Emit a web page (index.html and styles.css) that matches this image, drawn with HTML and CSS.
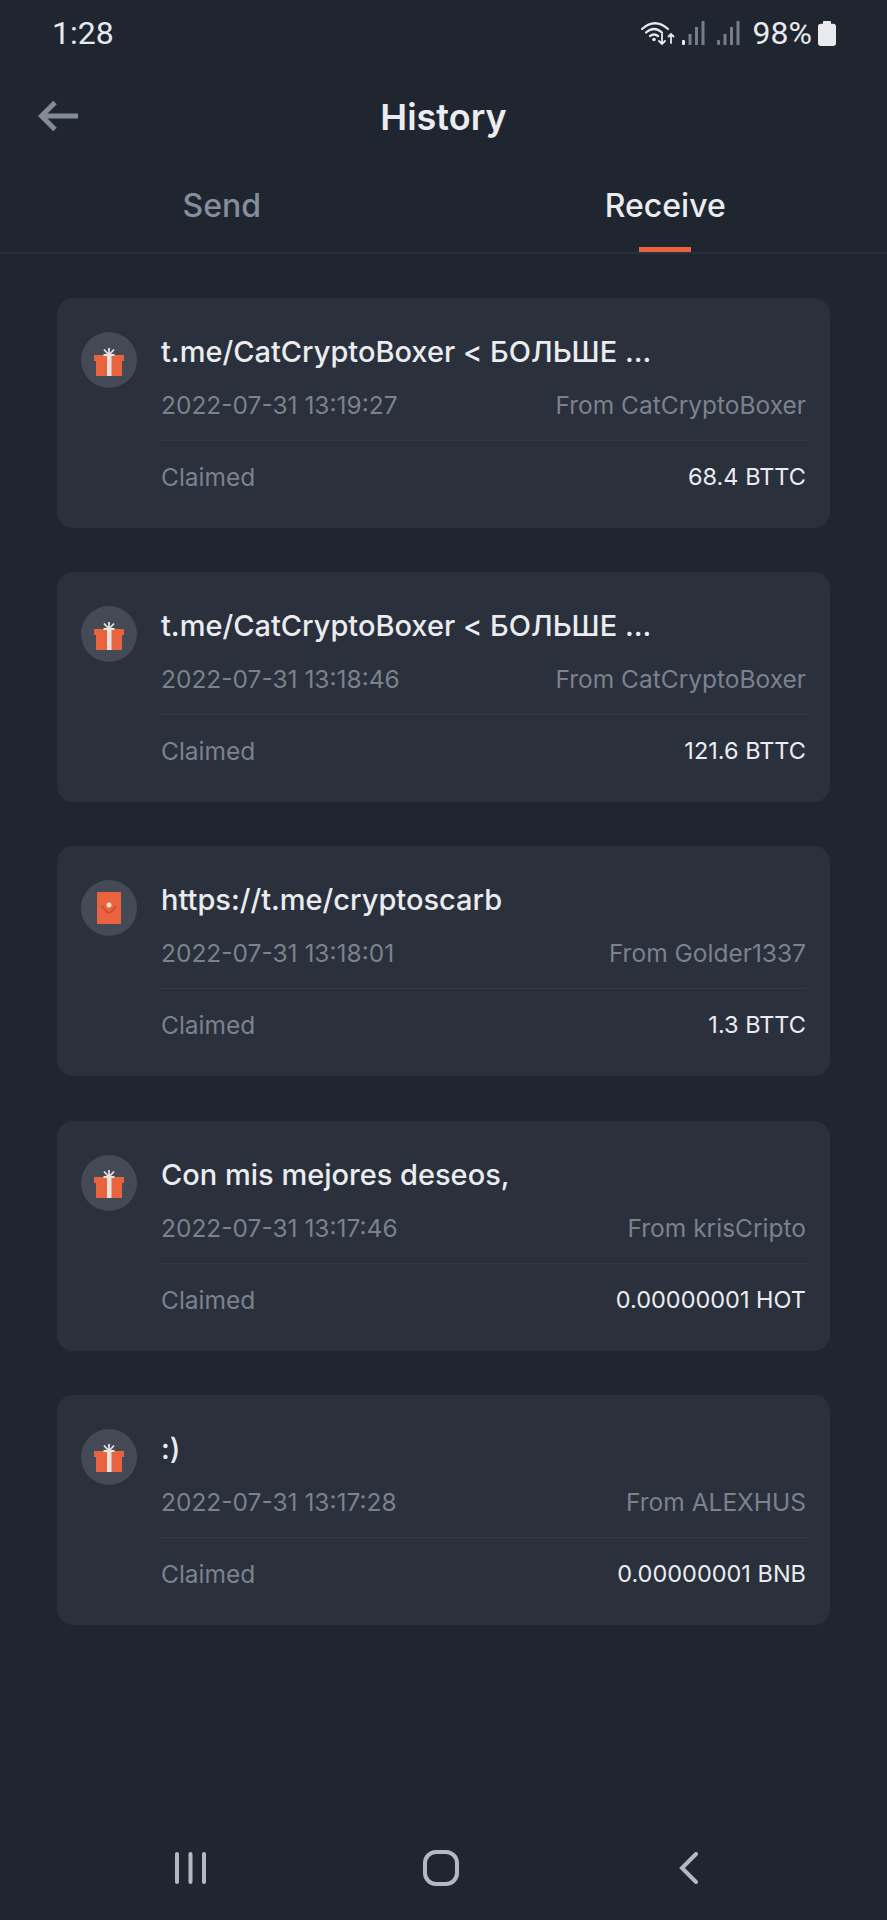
FILE: index.html
```html
<!DOCTYPE html>
<html lang="en">

<head>
    <meta charset="UTF-8">
    <meta name="viewport" content="width=device-width, initial-scale=1.0">
    <title>History</title>
    <link rel="stylesheet" href="styles.css">
</head>

<body>
    <svg class="defs" width="0" height="0">
        <symbol id="gift" viewBox="0 0 30 28">
            <path d="M0 7h30v6h-2v15H2V13H0z" fill="#e9633f"/>
            <rect x="13" y="7" width="4.500" height="21" fill="#e6e3e0"/>
            <path d="M15 7 10 1.500M15 7l5-5.500M15 7V0M15 7H9.500M15 7h5.500" stroke="#e6e3e0" stroke-width="1.800" fill="none"/>
        </symbol>
        <symbol id="envelope" viewBox="0 0 24 32">
            <rect width="24" height="32" rx="1" fill="#e9633f"/>
            <path d="M5 14q4 6 7 7 3-1 7-7" stroke="#d2492a" stroke-width="1.500" fill="none"/>
            <circle cx="12" cy="13" r="2.500" fill="#f3e3dc"/>
        </symbol>
    </svg>

    <div class="status-bar">
        <span class="clock">1:28</span>
        <div class="status-icons">
            <svg class="wifi" width="34" height="24" viewBox="0 0 34 24" fill="none" stroke="#e8eaee" stroke-linecap="round">
                <path d="M1 8Q14-3.500 27 8" stroke-width="2.200"/>
                <path d="M5 11.500q8-7 16 0" stroke-width="2.200"/>
                <path d="M9 15q4-3 8 0" stroke-width="2.200"/>
                <circle cx="13" cy="18.500" r="1.800" fill="#e8eaee" stroke="none"/>
                <path d="M21 13v10m-3-3 3 3 3-3M30 22v-9m-2.500 2.500 2.500-2.500 2.500 2.500" stroke-width="1.800"/>
            </svg>
            <svg class="signal" width="23" height="24" viewBox="0 0 23 24">
                <rect x="0" y="19" width="3" height="5" rx="1" fill="#e8eaee"/>
                <rect x="6.500" y="13" width="3" height="11" fill="#777e89"/>
                <rect x="13" y="6" width="3" height="18" fill="#777e89"/>
                <rect x="19.500" y="0" width="3" height="24" fill="#777e89"/>
            </svg>
            <svg class="signal second" width="23" height="24" viewBox="0 0 23 24">
                <rect x="0" y="19" width="3" height="5" rx="1" fill="#777e89"/>
                <rect x="6.500" y="13" width="3" height="11" fill="#777e89"/>
                <rect x="13" y="6" width="3" height="18" fill="#777e89"/>
                <rect x="19.500" y="0" width="3" height="24" fill="#777e89"/>
            </svg>
            <span class="battery-text">98%</span>
            <svg class="battery" width="18" height="26" viewBox="0 0 18 28" preserveAspectRatio="none">
                <path d="M5 2q0-1 1-1h6q1 0 1 1v2h2q3 0 3 3v18q0 3-3 3H3q-3 0-3-3V7q0-3 3-3h2z" fill="#e8eaee"/>
            </svg>
        </div>
    </div>

    <div class="title-bar">
        <svg class="back" width="40" height="30" viewBox="0 0 40 30" fill="none" stroke="#848b96" stroke-width="5">
            <path d="M40 15H5"/>
            <path d="M17 1.500 3.500 15 17 28.500"/>
        </svg>
        <h1>History</h1>
    </div>

    <div class="tabs">
        <div class="tab">Send</div>
        <div class="tab active">Receive</div>
    </div>

    <div class="list" id="list"></div>

    <div class="nav-bar">
        <svg width="31" height="32" viewBox="0 0 31 32" fill="#b4b9c1">
            <rect x="0" y="0" width="4" height="32" rx="2"/>
            <rect x="13.500" y="0" width="4" height="32" rx="2"/>
            <rect x="27" y="0" width="4" height="32" rx="2"/>
        </svg>
        <svg class="home" width="36" height="36" viewBox="0 0 36 36" fill="none" stroke="#b4b9c1" stroke-width="4">
            <rect x="2" y="2" width="32" height="32" rx="11"/>
        </svg>
        <svg width="19" height="32" viewBox="0 0 19 32" fill="none" stroke="#b4b9c1" stroke-width="4" stroke-linecap="round">
            <path d="M17 2 3 16l14 14"/>
        </svg>
    </div>

    <script>
        let rows = [
            { icon: "gift", title: "t.me/CatCryptoBoxer < БОЛЬШЕ ...", time: "2022-07-31 13:19:27", from: "From CatCryptoBoxer", amount: "68.4 BTTC" },
            { icon: "gift", title: "t.me/CatCryptoBoxer < БОЛЬШЕ ...", time: "2022-07-31 13:18:46", from: "From CatCryptoBoxer", amount: "121.6 BTTC" },
            { icon: "envelope", title: "https://t.me/cryptoscarb", time: "2022-07-31 13:18:01", from: "From Golder1337", amount: "1.3 BTTC" },
            { icon: "gift", title: "Con mis mejores deseos,", time: "2022-07-31 13:17:46", from: "From krisCripto", amount: "0.00000001 HOT" },
            { icon: "gift", title: ":)", time: "2022-07-31 13:17:28", from: "From ALEXHUS", amount: "0.00000001 BNB" }
        ];

        let list = document.getElementById("list");
        rows.forEach((item) => {
            list.innerHTML += `
                <div class="card">
                    <div class="badge"><svg class="${item.icon}"><use href="#${item.icon}"/></svg></div>
                    <div class="card-body">
                        <div class="card-title">${item.title}</div>
                        <div class="row row-top">
                            <span>${item.time}</span>
                            <span>${item.from}</span>
                        </div>
                        <div class="row row-bottom">
                            <span>Claimed</span>
                            <span class="amount">${item.amount}</span>
                        </div>
                    </div>
                </div>
            `;
        });
    </script>
</body>

</html>
```

FILE: styles.css
```css
* {
    margin: 0;
    padding: 0;
    box-sizing: border-box;
}

body {
    width: 887px;
    height: 1920px;
    font-family: "Inter", "Noto Sans", sans-serif;
    background: #1f2630;
    color: #eaecef;
    display: flex;
    flex-direction: column;
    overflow: hidden;
}

.defs {
    display: none;
}

.status-bar {
    height: 66px;
    padding: 0 51px 0 52px;
    display: flex;
    justify-content: space-between;
    align-items: center;
    font-family: "Roboto", sans-serif;
    font-size: 32px;
    color: #e8eaee;
}

.status-icons {
    display: flex;
    align-items: center;
}

.wifi {
    margin-right: 7px;
}

.signal.second {
    margin: 0 13px 0 12px;
}

.battery {
    margin-left: 6px;
}

.title-bar {
    height: 70px;
    margin-top: 16px;
    position: relative;
    display: flex;
    justify-content: center;
    align-items: center;
}

.title-bar h1 {
    font-size: 36px;
    font-weight: 600;
}

.back {
    position: absolute;
    left: 38px;
    top: 19px;
}

.tabs {
    height: 102px;
    border-bottom: 2px solid #2a313c;
    display: flex;
}

.tab {
    flex: 1;
    text-align: center;
    padding-top: 34px;
    font-size: 32px;
    font-weight: 500;
    color: #848e9c;
    position: relative;
}

.tab.active {
    color: #eaecef;
}

.tab.active::after {
    content: "";
    position: absolute;
    left: 50%;
    bottom: 0;
    width: 52px;
    height: 5px;
    margin-left: -26px;
    background: #e9633f;
}

.list {
    padding: 44px 57px 0;
    display: flex;
    flex-direction: column;
    gap: 44.200px;
}

.card {
    height: 230px;
    background: #2a303c;
    border-radius: 16px;
    padding: 34px 24px 0;
    display: flex;
    gap: 24px;
}

.badge {
    width: 56px;
    height: 56px;
    flex-shrink: 0;
    border-radius: 50%;
    background-color: #2d333f;
    background-image: radial-gradient(#444b57 0.7px, transparent 0.9px);
    background-size: 2px 2px;
    display: flex;
    justify-content: center;
    align-items: center;
}

.badge .gift {
    width: 30px;
    height: 28px;
    margin-top: 3px;
}

.badge .envelope {
    width: 24px;
    height: 32px;
}

.card-body {
    flex: 1;
}

.card-title {
    font-size: 29px;
    font-weight: 500;
    line-height: 40px;
}

.row {
    display: flex;
    justify-content: space-between;
    font-size: 24.500px;
    color: #7b828e;
}

.row-top {
    height: 69px;
    padding-top: 18px;
    line-height: 30px;
    border-bottom: 1px dotted #3d434f;
}

.row-bottom {
    padding-top: 20px;
    line-height: 32px;
}

.amount {
    color: #eaecef;
    font-size: 23.500px;
}

.nav-bar {
    margin-top: auto;
    margin-bottom: 34px;
    height: 36px;
    padding: 0 189px 0 175px;
    display: flex;
    justify-content: space-between;
    align-items: center;
}

.home {
    margin-left: -3px;
}
```
